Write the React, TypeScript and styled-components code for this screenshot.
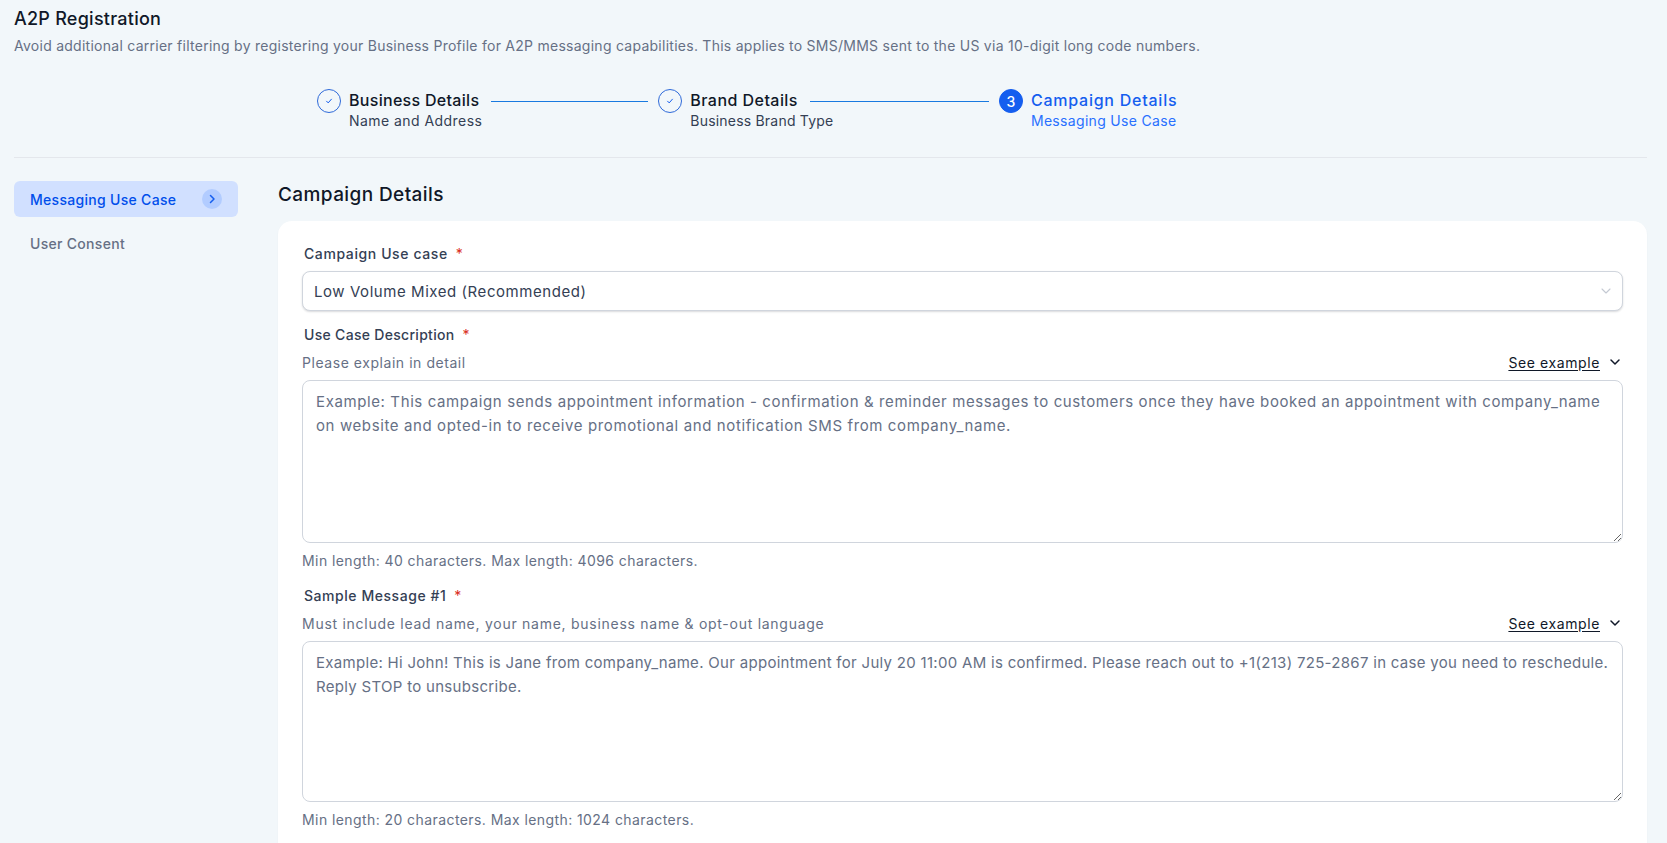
import React from "react";
import styled, { createGlobalStyle } from "styled-components";

const Global = createGlobalStyle`
  html, body { margin: 0; padding: 0; height: 100%; overflow: hidden; background: #f2f7fa; }
  body { font-family: Inter, "Open Sans", "Liberation Sans", sans-serif; color: #101828; }
  * { box-sizing: border-box; }
`;

const Page = styled.div`
  height: 843px;
  overflow: hidden;
  padding: 0 20px 0 14px;
`;
const Header = styled.header`
  padding-top: 8px;
`;
const Title = styled.h1`
  margin: 0;
  font-size: 18px;
  line-height: 22px;
  font-weight: 500;
  letter-spacing: 0.25px;
  color: #101828;
`;
const Subtitle = styled.p`
  margin: 5px 0 0;
  font-size: 14px;
  line-height: 22px;
  letter-spacing: 0.26px;
  color: #667085;
`;
const Stepper = styled.nav`
  display: flex;
  align-items: flex-start;
  padding: 31px 0 0 303px;
  height: 101px;
  border-bottom: 1px solid #e4e7ec;
`;
const Step = styled.div`
  display: flex;
  align-items: flex-start;
  gap: 8px;
`;
const StepIcon = styled.div<{ $current?: boolean }>`
  flex: none;
  width: 24px;
  height: 24px;
  border-radius: 50%;
  margin-top: 1px;
  display: flex;
  align-items: center;
  justify-content: center;
  font-size: 14px;
  font-weight: 500;
  color: #fff;
  border: 1px solid ${(p) => (p.$current ? "#155eef" : "#2f6ad9")};
  background: ${(p) => (p.$current ? "#155eef" : "transparent")};
`;
const StepText = styled.div<{ $current?: boolean }>`
  color: ${(p) => (p.$current ? "#155eef" : "#101828")};
`;
const StepName = styled.div<{ $ls: number }>`
  font-size: 16px;
  line-height: 24px;
  font-weight: 500;
  letter-spacing: ${(p) => p.$ls}px;
`;
const StepSub = styled.div<{ $current?: boolean; $ls: number }>`
  width: 0;
  white-space: nowrap;
  font-size: 14px;
  line-height: 20px;
  margin-top: -1px;
  letter-spacing: ${(p) => p.$ls}px;
  color: ${(p) => (p.$current ? "#2970ff" : "#344054")};
`;
const Connector = styled.div<{ $w: number }>`
  flex: none;
  width: ${(p) => p.$w}px;
  height: 1px;
  background: #1a7ae0;
  margin: 13px 10px 0 12px;
`;
const Body = styled.div`
  display: grid;
  grid-template-columns: 224px 1fr;
  column-gap: 40px;
  padding-top: 23px;
`;
const SideNav = styled.aside`
  display: flex;
  flex-direction: column;
  gap: 8px;
`;
const NavItem = styled.div<{ $active?: boolean }>`
  height: 36px;
  padding: 0 16px;
  border-radius: 6px;
  display: flex;
  align-items: center;
  justify-content: space-between;
  font-size: 14px;
  font-weight: 500;
  letter-spacing: 0.3px;
  color: ${(p) => (p.$active ? "#004eeb" : "#667085")};
  background: ${(p) => (p.$active ? "#d1e0ff" : "transparent")};
`;
const NavBadge = styled.span`
  width: 20px;
  height: 20px;
  border-radius: 50%;
  background: #b2ccff;
  color: #155eef;
  display: flex;
  align-items: center;
  justify-content: center;
`;
const Main = styled.main`
  min-width: 0;
`;
const SectionTitle = styled.h2`
  margin: 0;
  height: 40px;
  padding-top: 2px;
  font-size: 19px;
  line-height: 24px;
  font-weight: 500;
  letter-spacing: 0.4px;
  color: #101828;
`;
const Card = styled.section`
  background: #fff;
  border-radius: 14px;
  padding: 21px 24px 40px;
  box-shadow: 0 1px 2px rgba(16, 24, 40, 0.04);
`;
const Field = styled.div`
  margin-bottom: 12px;
`;
const Label = styled.label<{ $ls: number }>`
  display: block;
  padding-left: 2px;
  font-size: 14px;
  line-height: 24px;
  font-weight: 500;
  letter-spacing: ${(p) => p.$ls}px;
  color: #344054;
`;
const Required = styled.span`
  color: #d92d20;
  font-weight: 400;
  margin-left: 8px;
`;
const Select = styled.div`
  height: 40px;
  margin-top: 5px;
  padding: 0 9px 0 11px;
  border: 1px solid #d0d5dd;
  border-radius: 8px;
  box-shadow: 0 1px 2px rgba(16, 24, 40, 0.16);
  display: flex;
  align-items: center;
  justify-content: space-between;
  font-size: 15px;
  letter-spacing: 0.56px;
  color: #344054;
  background: #fff;
`;
const HelperRow = styled.div<{ $ls: number }>`
  display: flex;
  align-items: center;
  justify-content: space-between;
  height: 24px;
  margin-top: 3px;
  font-size: 14px;
  letter-spacing: ${(p) => p.$ls}px;
  color: #667085;
`;
const ExampleLink = styled.a`
  display: flex;
  align-items: center;
  gap: 8px;
  padding-right: 1px;
  color: #101828;
  font-weight: 400;
  letter-spacing: 0.6px;
  span { text-decoration: underline; text-underline-offset: 2px; }
`;
const TextArea = styled.textarea<{ $h: number; $ls: number }>`
  display: block;
  width: 100%;
  height: ${(p) => p.$h}px;
  margin-top: 6px;
  padding: 9px 10px 9px 13px;
  border: 1px solid #d0d5dd;
  border-radius: 8px;
  outline: none;
  font: inherit;
  font-size: 15px;
  line-height: 23.5px;
  letter-spacing: ${(p) => p.$ls}px;
  color: #667085;
  background: #fff;
  resize: vertical;
`;
const Hint = styled.div`
  margin-top: 6px;
  font-size: 14px;
  line-height: 23px;
  letter-spacing: 0.42px;
  color: #667085;
`;

const Check = () => (
  <svg width="10" height="10" viewBox="0 0 10 10" fill="none" stroke="#155eef" strokeWidth="1" strokeLinecap="round" strokeLinejoin="round">
    <path d="M2.6 5.2 4.2 6.9 7.4 3.2" />
  </svg>
);
const Chevron = ({ size = 14, color = "#101828", width = 1.5 }: { size?: number; color?: string; width?: number }) => (
  <svg width={size} height={size} viewBox="0 0 14 14" fill="none" stroke={color} strokeWidth={width} strokeLinecap="round" strokeLinejoin="round">
    <path d="M3 5l4 4 4-4" />
  </svg>
);
const ChevronRight = () => (
  <svg width="12" height="12" viewBox="0 0 12 12" fill="none" stroke="currentColor" strokeWidth="1.5" strokeLinecap="round" strokeLinejoin="round">
    <path d="M4.5 2.5 8 6 4.5 9.5" />
  </svg>
);

export default function App() {
  return (
    <Page>
      <Global />
      <Header>
        <Title>A2P Registration</Title>
        <Subtitle>
          Avoid additional carrier filtering by registering your Business Profile for A2P messaging capabilities. This applies to SMS/MMS sent to the US via 10-digit long code numbers.
        </Subtitle>
        <Stepper>
          <Step>
            <StepIcon><Check /></StepIcon>
            <StepText>
              <StepName $ls={0.3}>Business Details</StepName>
              <StepSub $ls={0.45}>Name and Address</StepSub>
            </StepText>
          </Step>
          <Connector $w={157} />
          <Step>
            <StepIcon><Check /></StepIcon>
            <StepText>
              <StepName $ls={0.45}>Brand Details</StepName>
              <StepSub $ls={0.2}>Business Brand Type</StepSub>
            </StepText>
          </Step>
          <Connector $w={179} />
          <Step>
            <StepIcon $current>3</StepIcon>
            <StepText $current>
              <StepName $ls={0.76}>Campaign Details</StepName>
              <StepSub $current $ls={0.32}>Messaging Use Case</StepSub>
            </StepText>
          </Step>
        </Stepper>
      </Header>
      <Body>
        <SideNav>
          <NavItem $active>
            Messaging Use Case
            <NavBadge><ChevronRight /></NavBadge>
          </NavItem>
          <NavItem>User Consent</NavItem>
        </SideNav>
        <Main>
          <SectionTitle>Campaign Details</SectionTitle>
          <Card>
            <Field>
              <Label $ls={0.6}>Campaign Use case<Required>*</Required></Label>
              <Select>
                Low Volume Mixed (Recommended)
                <Chevron color="#c4c9d2" width={1.1} />
              </Select>
            </Field>
            <Field>
              <Label $ls={0.3}>Use Case Description<Required>*</Required></Label>
              <HelperRow $ls={0.55}>
                Please explain in detail
                <ExampleLink><span>See example</span><Chevron /></ExampleLink>
              </HelperRow>
              <TextArea
                $h={163}
                $ls={0.61}
                readOnly
                defaultValue="Example: This campaign sends appointment information - confirmation & reminder messages to customers once they have booked an appointment with company_name on website and opted-in to receive promotional and notification SMS from company_name."
              />
              <Hint>Min length: 40 characters. Max length: 4096 characters.</Hint>
            </Field>
            <Field>
              <Label $ls={0.55}>Sample Message #1<Required>*</Required></Label>
              <HelperRow $ls={0.73}>
                Must include lead name, your name, business name & opt-out language
                <ExampleLink><span>See example</span><Chevron /></ExampleLink>
              </HelperRow>
              <TextArea
                $h={161}
                $ls={0.3}
                readOnly
                defaultValue="Example: Hi John! This is Jane from company_name. Our appointment for July 20 11:00 AM is confirmed. Please reach out to +1(213) 725-2867 in case you need to reschedule. Reply STOP to unsubscribe."
              />
              <Hint>Min length: 20 characters. Max length: 1024 characters.</Hint>
            </Field>
          </Card>
        </Main>
      </Body>
    </Page>
  );
}
